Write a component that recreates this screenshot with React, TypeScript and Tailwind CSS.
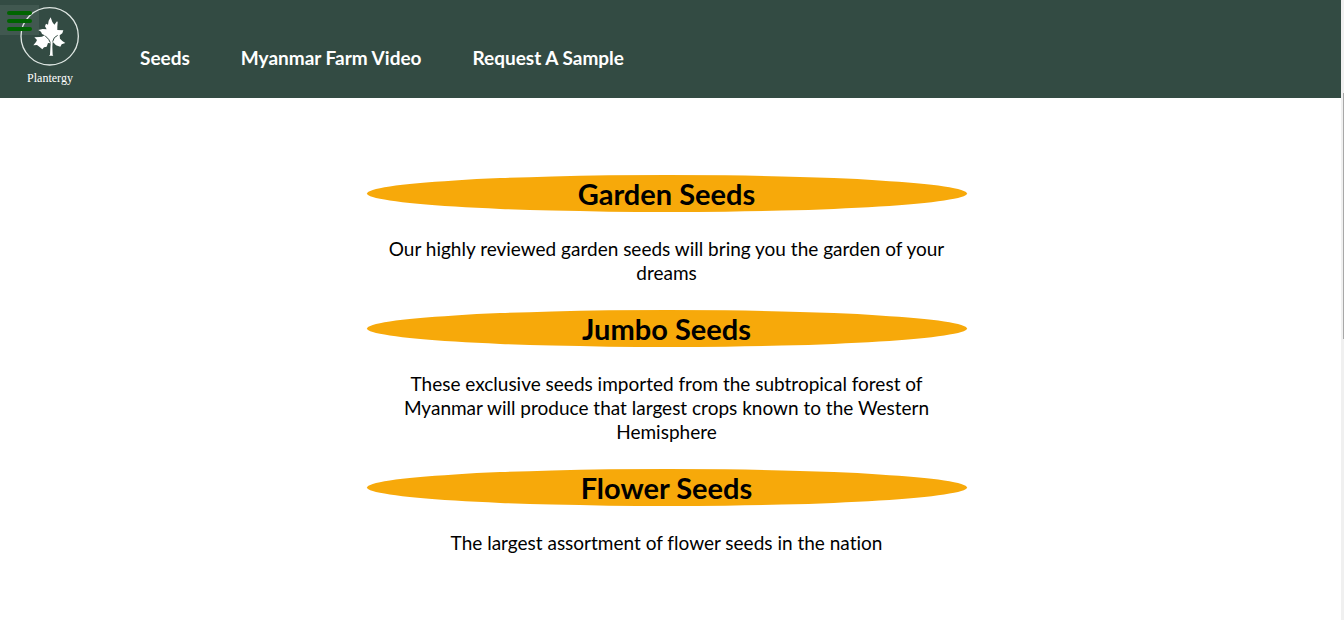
const links = ["Seeds", "Myanmar Farm Video", "Request A Sample"];

const products = [
  { name: "Garden Seeds", text: "Our highly reviewed garden seeds will bring you the garden of your dreams" },
  {
    name: "Jumbo Seeds",
    text: "These exclusive seeds imported from the subtropical forest of Myanmar will produce that largest crops known to the Western Hemisphere",
  },
  { name: "Flower Seeds", text: "The largest assortment of flower seeds in the nation" },
];

function Logo() {
  return (
    <a href="#home" className="flex w-25 flex-col items-center pt-1.5 text-white">
      <svg viewBox="0 0 180 180" className="size-15" fill="none" aria-hidden="true">
        <circle cx="89" cy="91" r="86" stroke="#dfe7e3" strokeWidth="4" />
        <path
          fill="#fff"
          d="M92 34L97 48L103 56L111 46L113 48L112 62L112 72L130 73L127 82L119 88L120 98L127 105L136 111L125 115L121 122L108 118L101 110L98 108L97 122L98 146L100 149H87L90 146L92 112L84 111L80 122L72 124L67 130L58 122L51 117L40 118L48 108L51 102L43 94L58 93L66 92L74 88L66 84L63 77L55 72L68 69L80 70L75 61L78 53L84 56L86 44Z"
        />
        <path d="M91 110L86 100L75 89M98 107L103 95L113 88" stroke="#334b43" strokeWidth="3" />
      </svg>
      <span className="mt-1 font-['Liberation_Serif',serif] text-xs leading-4">Plantergy</span>
    </a>
  );
}

export default function App() {
  return (
    <div className="flex min-h-screen bg-white font-['Lato','Open_Sans',sans-serif] text-black [font-variant-ligatures:none]">
      <div className="min-w-0 flex-1">
        <header className="relative flex h-[98px] items-start bg-[#334b43]">
          <Logo />
          <button
            type="button"
            aria-label="Open menu"
            className="absolute top-[5px] left-0 flex h-[30px] w-[39px] flex-col items-start gap-1 bg-white/7 pt-1.5 pl-[7px]"
          >
            <span className="h-1 w-[25px] rounded-full bg-[#006400]" />
            <span className="h-1 w-[25px] rounded-full bg-[#006400]" />
            <span className="h-1 w-[25px] rounded-full bg-[#006400]" />
          </button>
          <nav className="flex gap-[51px] pt-[46px] pl-10">
            {links.map((link) => (
              <a key={link} href="#" className="text-[19px] leading-6 font-bold whitespace-nowrap text-white">
                {link}
              </a>
            ))}
          </nav>
        </header>
        <main className="mx-auto w-full max-w-[608px] pt-[77px] pr-2 text-center">
          {products.map((product) => (
            <section key={product.name} className="mb-[25px]">
              <h2 className="rounded-[50%] bg-[#f7a90a] pt-px text-[29px] leading-9 font-bold">{product.name}</h2>
              <p className="mt-[25px] px-4 text-[19px] leading-6">{product.text}</p>
            </section>
          ))}
        </main>
      </div>
      <div aria-hidden="true" className="flex w-[3px] justify-end bg-[#f0f0f0] pt-[93px]">
        <div className="h-[246px] w-px bg-[#a8a8a8]" />
      </div>
    </div>
  );
}
